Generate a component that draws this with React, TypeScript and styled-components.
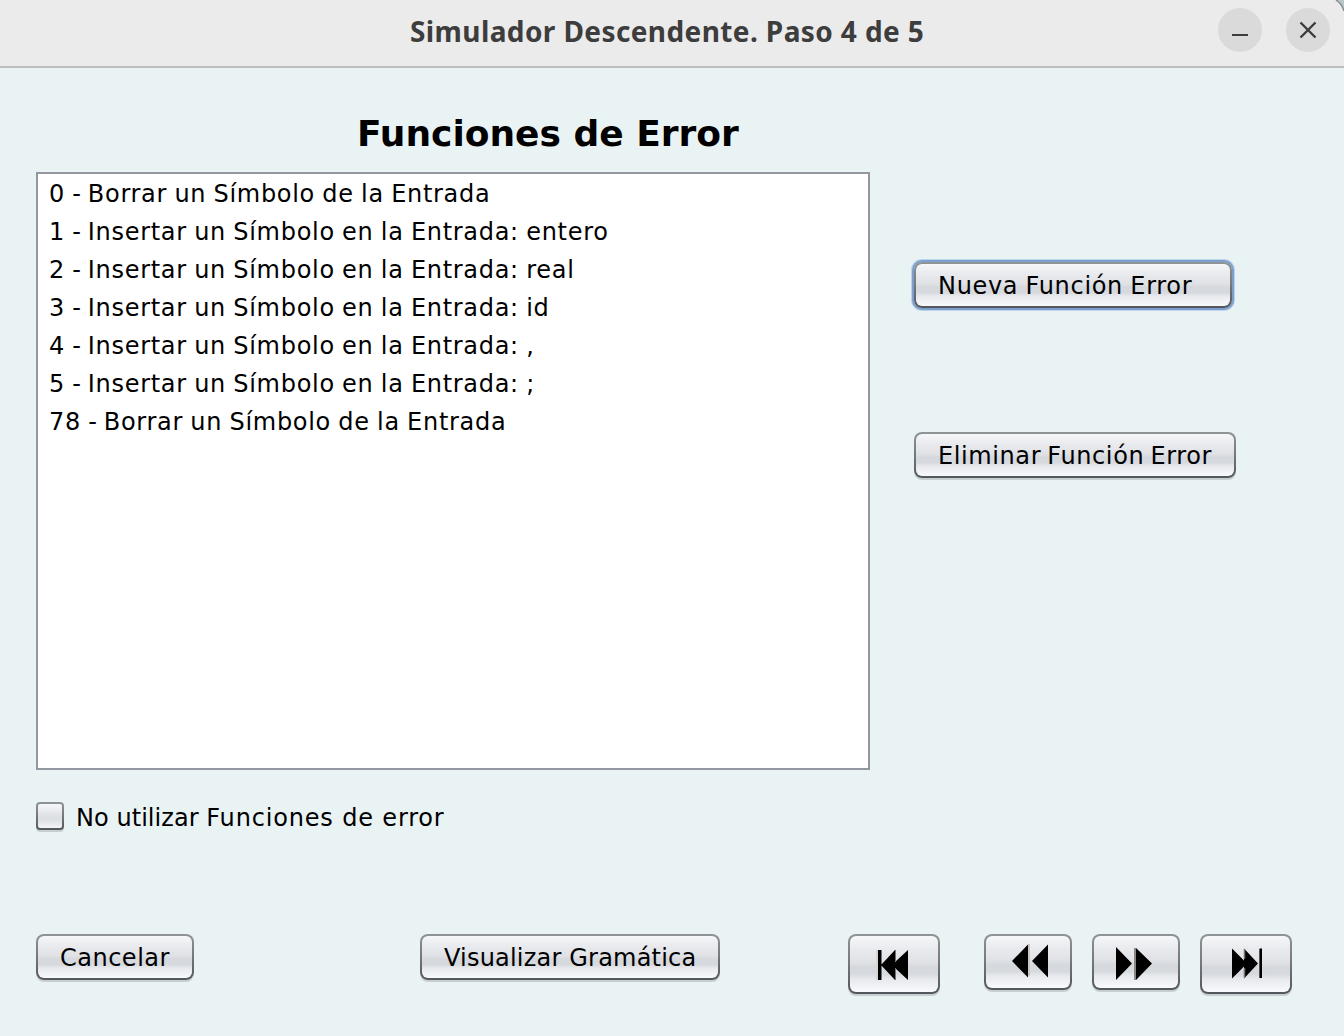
import React from 'react';
import styled, { createGlobalStyle, css } from 'styled-components';

const GlobalStyle = createGlobalStyle`
  *, *::before, *::after { box-sizing: border-box; }
  body { margin: 0; background: #eaf3f4; }
`;

const Window = styled.div`
  display: flex;
  flex-direction: column;
  width: 1344px;
  height: 1036px;
  overflow: hidden;
  background: #eaf3f4;
  color: #000;
  font: 24px/38px 'DejaVu Sans', sans-serif;
`;

const TitleBar = styled.header`
  position: relative;
  flex: none;
  display: flex;
  justify-content: flex-end;
  gap: 24px;
  height: 68px;
  padding: 8px 14px 0 410px;
  background: #ebebeb;
  border-bottom: 2px solid #bebebe;
`;

const WindowTitle = styled.h1`
  flex: 1;
  margin: 0;
  font: bold 28px/46px 'Noto Sans', sans-serif;
  letter-spacing: 0.4px;
  color: #3d3d3d;
  white-space: nowrap;
`;

const WindowButton = styled.button`
  display: grid;
  place-items: center;
  width: 44px;
  height: 44px;
  padding: 0;
  border: 0;
  border-radius: 50%;
  background: #dadada;
`;

const Corner = styled.svg`
  position: absolute;
  top: 0;
  right: 0;
`;

const Content = styled.main`
  flex: 1;
  display: flex;
  flex-direction: column;
  padding: 42px 36px 0;
`;

const Heading = styled.h2`
  margin: 0 0 14px 321px;
  font: bold 36px/48px 'DejaVu Sans', sans-serif;
  white-space: nowrap;
`;

const Columns = styled.div`
  display: flex;
  gap: 44px;
`;

const FunctionList = styled.ul`
  width: 834px;
  height: 598px;
  margin: 0;
  padding: 1px 11px 0;
  list-style: none;
  background: #fff;
  border: 2px solid #9297a1;
`;

const FunctionItem = styled.li`
  height: 38px;
  letter-spacing: 0.7px;
  word-spacing: -1px;
  white-space: pre;
`;

const Dash = styled.span`
  letter-spacing: -0.4px;
  word-spacing: 0;
`;

const Actions = styled.div`
  display: flex;
  flex-direction: column;
  gap: 124px;
  padding-top: 90px;
`;

const metal = css`
  border: 2px solid transparent;
  background:
    linear-gradient(#f6f7f9 0%, #e9ebee 22%, #dfe1e5 48%, #d5d8dd 55%, #d6d9de 68%, #e6e8ec 76%, #f8fafd 100%) padding-box,
    linear-gradient(#8f9497, #777b80 45%, #53565c) border-box;
`;

const Button = styled.button<{ $width: number; $height?: number; $focused?: boolean; $spacing?: number; $wordSpacing?: number }>`
  ${metal}
  flex: none;
  width: ${(p) => p.$width}px;
  height: ${(p) => p.$height ?? 46}px;
  padding: 2px 0 0 22px;
  border-radius: 8px;
  box-shadow: ${(p) => (p.$focused ? '0 0 0 2px #7ba0cf, 0 0 0 3px #bed3e8' : '0 2px 0 #c8cfd1')};
  color: #000;
  font: 24px/38px 'DejaVu Sans', sans-serif;
  letter-spacing: ${(p) => p.$spacing ?? 0}px;
  word-spacing: ${(p) => p.$wordSpacing ?? 0}px;
  text-align: left;
  white-space: nowrap;
`;

const NavButton = styled(Button)`
  padding: 0;
  line-height: 0;
`;

const CheckRow = styled.label`
  display: flex;
  align-items: flex-start;
  gap: 12px;
  height: 38px;
  margin-top: 29px;
`;

const CheckText = styled.span`
  letter-spacing: 0.83px;
`;

const Narrow = styled.span`
  letter-spacing: 0.05px;
`;

const CheckBox = styled.input`
  ${metal}
  appearance: none;
  width: 28px;
  height: 28px;
  margin: 3px 0 0;
  border-radius: 4px;
  background:
    linear-gradient(#f6f7f9, #dfe1e5 50%, #dbdee2 62%, #f3f5f8) padding-box,
    linear-gradient(#8f9497, #777b80 45%, #53565c) border-box;
  box-shadow: 0 2px 0 #c8cfd1;
`;

const Footer = styled.footer`
  display: flex;
  align-items: flex-start;
  gap: 128px;
  margin-top: 97px;

  & > :first-child { margin-right: 98px; }
`;

const Navigation = styled.nav`
  display: flex;
  gap: 20px;

  & > :first-child { margin-right: 24px; }
`;

const functions: [number, string][] = [
  [0, 'Borrar un Símbolo de la Entrada'],
  [1, 'Insertar un Símbolo en la Entrada: entero'],
  [2, 'Insertar un Símbolo en la Entrada: real'],
  [3, 'Insertar un Símbolo en la Entrada: id'],
  [4, 'Insertar un Símbolo en la Entrada: ,'],
  [5, 'Insertar un Símbolo en la Entrada: ;'],
  [78, 'Borrar un Símbolo de la Entrada'],
];

const FirstIcon = () => (
  <svg width="88" height="56">
    <path d="M26 14h2v30h-2z" fill="#d8d4d2" />
    <path d="M28 14h3.500v30H28zM31 29 45 14v12L58 14v30L45 32v12z" />
    <path d="M45.500 14v11M45.500 33v11" stroke="#77706e" strokeWidth="1" />
  </svg>
);

const BackIcon = () => (
  <svg width="84" height="52">
    <path d="M42 8h2v32h-2z" fill="#cbc6c3" />
    <path d="M26 25 42 8.500v33zM46 25 62 8.500v33z" />
  </svg>
);

const ForwardIcon = () => (
  <svg width="84" height="52">
    <path d="M40 12h2v32h-2z" fill="#8c8783" />
    <path d="M22 11v33l16-16.500zM42 12v32l16-16.500z" />
  </svg>
);

const LastIcon = () => (
  <svg width="88" height="56">
    <path d="M57 13h1v29h-1z" fill="#aaa4a0" />
    <path d="M30 12.500v30l12-12v12l14-15-14-15v12zM57.500 12.500H60v29.500h-2.500z" />
    <path d="M42.500 13v10M42.500 32v10" stroke="#77706e" strokeWidth="1.500" />
  </svg>
);

export default function App() {
  return (
    <Window>
      <GlobalStyle />
      <TitleBar>
        <WindowTitle>Simulador Descendente. Paso 4 de 5</WindowTitle>
        <WindowButton aria-label="Minimizar">
          <svg width="44" height="44"><path d="M14 26h16v2H14z" fill="#3d3d3d" /></svg>
        </WindowButton>
        <WindowButton aria-label="Cerrar">
          <svg width="44" height="44"><path d="m14.500 14.500 15 15m0-15-15 15" stroke="#3d3d3d" strokeWidth="2.400" /></svg>
        </WindowButton>
        <Corner width="10" height="12">
          <path d="M2 0Q8 4 10 11V0z" fill="#b9c5c6" />
          <path d="M2 0Q8 4 10 11" fill="none" stroke="#858d8d" strokeWidth="1.500" />
        </Corner>
      </TitleBar>
      <Content>
        <Heading>Funciones de Error</Heading>
        <Columns>
          <FunctionList>
            {functions.map(([id, text]) => (
              <FunctionItem key={id}>{id} <Dash>- </Dash>{text}</FunctionItem>
            ))}
          </FunctionList>
          <Actions>
            <Button $width={318} $focused $spacing={0.68} $wordSpacing={-1}>Nueva Función Error</Button>
            <Button $width={322} $spacing={0.6} $wordSpacing={-2}>Eliminar Función Error</Button>
          </Actions>
        </Columns>
        <CheckRow>
          <CheckBox type="checkbox" />
          <CheckText><Narrow>No utilizar </Narrow>Funciones de error</CheckText>
        </CheckRow>
        <Footer>
          <Button $width={158} $spacing={0.5}>Cancelar</Button>
          <Button $width={300} $spacing={0.2}>Visualizar Gramática</Button>
          <Navigation>
            <NavButton $width={92} $height={60} aria-label="Primero"><FirstIcon /></NavButton>
            <NavButton $width={88} $height={56} aria-label="Anterior"><BackIcon /></NavButton>
            <NavButton $width={88} $height={56} aria-label="Siguiente"><ForwardIcon /></NavButton>
            <NavButton $width={92} $height={60} aria-label="Último"><LastIcon /></NavButton>
          </Navigation>
        </Footer>
      </Content>
    </Window>
  );
}
